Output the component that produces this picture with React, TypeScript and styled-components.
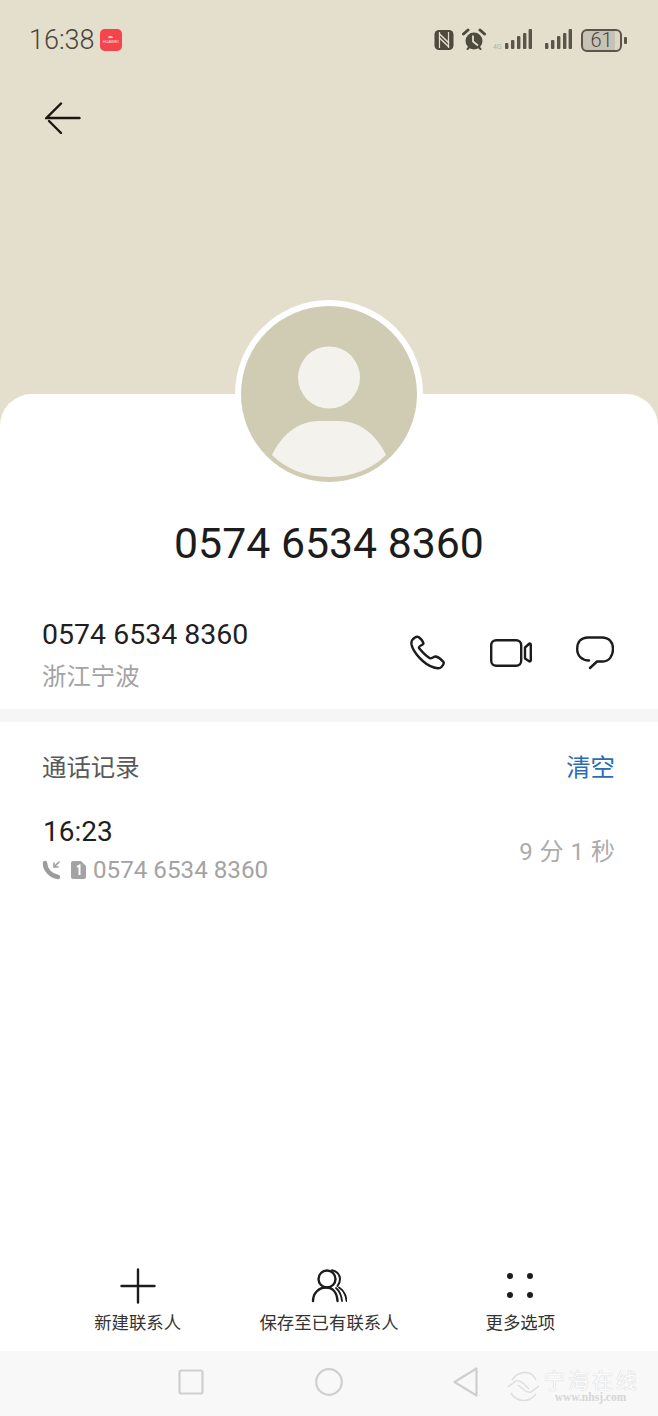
import React from 'react';
import styled, { createGlobalStyle } from 'styled-components';

const CJK = `Roboto, "Noto Sans CJK SC", sans-serif`;

const GlobalStyle = createGlobalStyle`
  html, body {
    margin: 0;
    padding: 0;
    background: #ffffff;
    font-family: ${CJK};
  }
`;

const Page = styled.div`
  position: relative;
  width: 658px;
  height: 1416px;
  display: flex;
  flex-direction: column;
  overflow: hidden;
  background: #e4dfcd;
`;

const Header = styled.header`
  height: 394px;
  flex: none;
  display: flex;
  flex-direction: column;
`;

const StatusBar = styled.div`
  height: 80px;
  padding: 0 31px 0 29px;
  display: flex;
  align-items: center;
  justify-content: space-between;
  color: #4a4538;
`;

const StatusLeft = styled.div`
  display: flex;
  align-items: center;
  gap: 5px;
`;

const Clock = styled.span`
  font-size: 27px;
  font-weight: 300;
  line-height: 1;
`;

const AppBadge = styled.div`
  width: 22px;
  height: 22px;
  border-radius: 5px;
  background: #f4444c;
  box-shadow: 0 0 1px #f7a09c;
  display: flex;
  flex-direction: column;
  align-items: center;
  justify-content: center;
  gap: 2px;
  color: #ffe6e4;
  font-size: 4px;
  line-height: 1;
  font-family: "Liberation Sans", sans-serif;
`;

const BadgeMark = styled.span`
  width: 5px;
  height: 2px;
  border-radius: 2px 2px 0 0;
  background: #ffc9c6;
`;

const StatusRight = styled.div`
  display: flex;
  align-items: center;
`;

const NfcIcon = styled.svg`
  width: 20px;
  height: 22px;
  margin-right: 8px;
`;

const AlarmIcon = styled.svg`
  width: 24px;
  height: 24px;
  margin-right: 7px;
`;

const Signal = styled.svg<{ $gap: number }>`
  width: 39px;
  height: 22px;
  margin-right: ${p => p.$gap}px;
`;

const Battery = styled.div`
  width: 41px;
  height: 23px;
  box-sizing: border-box;
  border: 2px solid #5a5548;
  border-radius: 6px;
  background: linear-gradient(90deg, #c6c2b5 0 86%, #dcd8c8 86% 100%);
  display: flex;
  align-items: center;
  justify-content: center;
  font-size: 20px;
  font-weight: 300;
  line-height: 1;
  color: #4a4538;
`;

const BatteryTip = styled.div`
  width: 3px;
  height: 7px;
  margin-left: 2px;
  border-radius: 1px;
  background: #5a5548;
`;

const BackButton = styled.button`
  width: 36px;
  height: 34px;
  margin: 21px 0 0 45px;
  padding: 0;
  border: none;
  background: none;
  display: flex;
`;

const Sheet = styled.main`
  flex: 1;
  min-height: 0;
  display: flex;
  flex-direction: column;
  background: #ffffff;
  border-radius: 32px 32px 0 0;
`;

const Avatar = styled.svg`
  display: block;
  width: 188px;
  height: 188px;
  margin: -94px auto 0;
`;

const Title = styled.h1`
  margin: 30px 0 0;
  height: 50px;
  font-size: 42.8px;
  font-weight: 400;
  line-height: 50px;
  text-align: center;
  color: #1c1c1c;
`;

const NumberRow = styled.section`
  height: 113px;
  margin-top: 41px;
  padding: 0 44px 0 42px;
  box-sizing: border-box;
  display: flex;
  justify-content: space-between;
  border-bottom: 13px solid #f6f6f6;
`;

const NumberInfo = styled.div`
  padding-top: 7px;
`;

const NumberText = styled.div`
  height: 38px;
  font-size: 28.5px;
  line-height: 38px;
  color: #1f1f1f;
`;

const Region = styled.div`
  margin-top: 5px;
  font-size: 24.4px;
  line-height: 36px;
  color: #a3a3a3;
`;

const ActionIcons = styled.div`
  display: flex;
  align-items: center;
  align-self: flex-start;
  gap: 44px;
  padding-top: 26px;
`;

const LogSection = styled.section`
  padding: 25px 43px 0 42px;
`;

const LogHeader = styled.div`
  height: 36px;
  display: flex;
  align-items: center;
  justify-content: space-between;
  font-size: 24.4px;
  color: #595959;
`;

const ClearLink = styled.span`
  color: #2a6db5;
`;

const LogRow = styled.div`
  margin-top: 31px;
  display: flex;
  align-items: flex-start;
  justify-content: space-between;
`;

const LogTime = styled.div`
  height: 36px;
  margin-left: 1px;
  font-size: 28px;
  line-height: 36px;
  color: #1f1f1f;
`;

const LogDetail = styled.div`
  height: 36px;
  margin-top: 2px;
  display: flex;
  align-items: center;
  font-size: 24.2px;
  color: #a3a3a3;
`;

const CallIcon = styled.svg`
  margin-right: 9px;
`;

const SimIcon = styled.svg`
  margin-right: 7px;
`;

const Duration = styled.div`
  margin-top: 20px;
  font-size: 24px;
  line-height: 36px;
  color: #ababab;
  word-spacing: 1px;
`;

const BottomActions = styled.nav`
  margin-top: auto;
  padding: 0 42px 16px;
  display: grid;
  grid-template-columns: repeat(3, 1fr);
`;

const BottomAction = styled.div`
  display: flex;
  flex-direction: column;
  align-items: center;
  gap: 7px;
`;

const BottomLabel = styled.span`
  font-size: 17.4px;
  line-height: 24px;
  color: #333333;
`;

const NavBar = styled.div`
  flex: none;
  height: 65px;
  background: #f8f8f8;
  display: grid;
  grid-template-columns: 138px 138px 136px;
  justify-content: center;
  justify-items: center;
  align-items: center;
  padding-right: 2px;
  padding-bottom: 4px;
  box-sizing: border-box;
`;

const Watermark = styled.div`
  position: absolute;
  left: 507px;
  top: 1370px;
  display: flex;
  align-items: center;
  gap: 4px;
  color: #fbfbfb;
  text-shadow: 0 0 1px #d2d2d2, 0 0 1px #d2d2d2;
`;

const WatermarkText = styled.div`
  display: flex;
  flex-direction: column;
  align-items: center;
`;

const WatermarkName = styled.span`
  font-size: 21px;
  line-height: 22px;
  letter-spacing: 3px;
  margin-right: -3px;
`;

const WatermarkUrl = styled.span`
  font-family: "Liberation Serif", serif;
  font-size: 11.5px;
  font-weight: 700;
  line-height: 11px;
  color: #d6d6d6;
  text-shadow: none;
`;

const SignalBars = ({ faint }: { faint?: boolean }) => (
  <Signal $gap={faint ? 1 : 9} viewBox="0 0 39 22">
    {faint && <text x="0" y="20" fontSize="7" fill="#b5b1a3" fontFamily="Roboto, sans-serif">4G</text>}
    <g fill="#5a5548">
      <rect x="12" y="14" width="3.4" height="6" rx="1" />
      <rect x="18" y="11" width="3.4" height="9" rx="1" />
      <rect x="24" y="7" width="3.4" height="13" rx="1" />
      <rect x="30" y="4" width="3.4" height="16" rx="1" />
      <rect x="35.6" y="0" width="3.4" height="20" rx="1" />
    </g>
  </Signal>
);

export default function App() {
  return (
    <Page>
      <GlobalStyle />
      <Header>
        <StatusBar>
          <StatusLeft>
            <Clock>16:38</Clock>
            <AppBadge>
              <BadgeMark />
              <span>HUAWEI</span>
            </AppBadge>
          </StatusLeft>
          <StatusRight>
            <NfcIcon viewBox="0 0 20 22">
              <rect x="0.5" y="1" width="19" height="20" rx="4.5" fill="#4f4a3e" />
              <path d="M5.500 3v16M14.500 3v16" stroke="#e4dfcd" strokeWidth="1.200" />
              <path d="M5 4.500 15 14M5 8.500 15 18" fill="none" stroke="#e4dfcd" strokeWidth="1.600" />
            </NfcIcon>
            <AlarmIcon viewBox="0 0 24 24">
              <circle cx="12" cy="13" r="8.500" fill="#4f4a3e" />
              <path d="M1.500 6 6 2M22.500 6 18 2" stroke="#4f4a3e" strokeWidth="3" strokeLinecap="round" />
              <path d="M5.500 21l2-2M18.500 21l-2-2" stroke="#4f4a3e" strokeWidth="2" strokeLinecap="round" />
              <path d="M11 7.500v6l5 4" fill="none" stroke="#e4dfcd" strokeWidth="1.800" />
            </AlarmIcon>
            <SignalBars faint />
            <SignalBars />
            <Battery>61</Battery>
            <BatteryTip />
          </StatusRight>
        </StatusBar>
        <BackButton aria-label="back">
          <svg width="36" height="34" viewBox="0 0 36 34" fill="none" stroke="#1a1712" strokeWidth="2.400" strokeLinecap="round">
            <path d="M34.500 17H1.500L16 2.500" />
            <path d="M4 20 16 32" />
          </svg>
        </BackButton>
      </Header>

      <Sheet>
        <Avatar viewBox="0 0 188 188">
          <circle cx="94" cy="94" r="94" fill="#ffffff" />
          <circle cx="94" cy="94" r="88" fill="#d0cbb3" />
          <circle cx="94" cy="77.500" r="31" fill="#f4f2ec" />
          <path d="M37 155C46 136 62 121 84 121h20c22 0 38 15 47 34-13 13-33 22-57 22s-44-9-57-22Z" fill="#f4f2ec" />
        </Avatar>
        <Title>0574 6534 8360</Title>

        <NumberRow>
          <NumberInfo>
            <NumberText>0574 6534 8360</NumberText>
            <Region>浙江宁波</Region>
          </NumberInfo>
          <ActionIcons>
            <svg width="36" height="36" viewBox="0 0 36 36" fill="none" stroke="#1c1c1c" strokeWidth="2.400" strokeLinejoin="round">
              <path d="M5 2.500C2.500 4 1 6.500 1.500 9.500C3 17 14 30 24 32.500C27 33.500 30 33.500 31.500 32C33 30.500 34.500 29 33.500 27C31 24 28 22 26 21.500C24 21 21 24.500 19.500 23C15.500 20.500 11 15.500 9 13C8 11 13.500 10 13.500 8.500C13 6 10.500 3.500 8.500 2C7.500 1.500 6 1.800 5 2.500Z" />
            </svg>
            <svg width="42" height="28" viewBox="0 0 42 28" fill="none" stroke="#1c1c1c" strokeWidth="2.400" strokeLinejoin="round">
              <rect x="1.200" y="1.200" width="30" height="25.600" rx="5" />
              <path d="M35 8.500v11l4.500 3c.8 0 1.300-.5 1.300-1.200V5.700c0-.7-.5-1.200-1.300-1.200Z" />
            </svg>
            <svg width="38" height="34" viewBox="0 0 38 34" fill="none" stroke="#1c1c1c" strokeWidth="2.400" strokeLinecap="round" strokeLinejoin="round">
              <path d="M14 32 21 25.500H27C33 25.500 37 20 37 13C37 6 33 1.500 26 1.500H12C5 1.500 1.200 6 1.200 13C1.200 20 6 24.500 13 24.500" />
            </svg>
          </ActionIcons>
        </NumberRow>

        <LogSection>
          <LogHeader>
            <span>通话记录</span>
            <ClearLink>清空</ClearLink>
          </LogHeader>
          <LogRow>
            <div>
              <LogTime>16:23</LogTime>
              <LogDetail>
                <CallIcon width="20" height="20" viewBox="0 0 20 20" fill="none" stroke="#9c9c9c" strokeLinecap="round">
                  <path d="M3 3c0 7 6 13 13 14" strokeWidth="4.500" />
                  <path d="M17 2l-5 5M12 3v4h4" strokeWidth="1.600" />
                </CallIcon>
                <SimIcon width="15" height="18" viewBox="0 0 15 18">
                  <path d="M2 0h8l5 5v11a2 2 0 0 1-2 2H2a2 2 0 0 1-2-2V2a2 2 0 0 1 2-2Z" fill="#a3a3a3" />
                  <path d="M6 6l2.500-1.500V14" fill="none" stroke="#ffffff" strokeWidth="2" />
                </SimIcon>
                0574 6534 8360
              </LogDetail>
            </div>
            <Duration>9 分 1 秒</Duration>
          </LogRow>
        </LogSection>

        <BottomActions>
          <BottomAction>
            <svg width="36" height="36" viewBox="0 0 36 36" stroke="#1c1c1c" strokeWidth="2.400" strokeLinecap="round">
              <path d="M18 1.500v33M1.500 18h33" />
            </svg>
            <BottomLabel>新建联系人</BottomLabel>
          </BottomAction>
          <BottomAction>
            <svg width="36" height="36" viewBox="0 0 36 36" fill="none" stroke="#1c1c1c" strokeWidth="2.400" strokeLinecap="round">
              <circle cx="16" cy="11" r="8.500" />
              <path d="M2 33C2 25 8 19.500 15 19.500C22 19.500 26 25 26.500 33" />
              <path d="M21 2.200C26 3 29 7 29 11C29 14 28 16 26.500 18" strokeWidth="2" />
              <path d="M25 20C28.500 23 30.500 28 31 33" strokeWidth="1.800" />
              <path d="M28 19.500C32 22 35 27 35.500 33" strokeWidth="1.800" />
            </svg>
            <BottomLabel>保存至已有联系人</BottomLabel>
          </BottomAction>
          <BottomAction>
            <svg width="36" height="36" viewBox="0 0 36 36" fill="#1c1c1c">
              <circle cx="8" cy="8" r="3" />
              <circle cx="28" cy="8" r="3" />
              <circle cx="8" cy="27" r="3" />
              <circle cx="28" cy="27" r="3" />
            </svg>
            <BottomLabel>更多选项</BottomLabel>
          </BottomAction>
        </BottomActions>
      </Sheet>

      <NavBar>
        <svg width="26" height="26" viewBox="0 0 26 26" fill="none" stroke="#cfcfcf" strokeWidth="2.200">
          <rect x="1.500" y="1.500" width="23" height="23" rx="2" />
        </svg>
        <svg width="28" height="28" viewBox="0 0 28 28" fill="none" stroke="#cfcfcf" strokeWidth="2.200">
          <circle cx="14" cy="14" r="12.800" />
        </svg>
        <svg width="26" height="30" viewBox="0 0 26 30" fill="none" stroke="#cfcfcf" strokeWidth="2.200" strokeLinejoin="round">
          <path d="M23.500 1.500v27L1.500 15Z" />
        </svg>
      </NavBar>

      <Watermark>
        <svg width="33" height="31" viewBox="0 0 33 31" fill="none" stroke="#dedede" strokeWidth="1.500">
          <path d="M5 9C9 3 14 1.500 18 1.500C23 1.500 27 4 29 9M4 22C7 27 12 29.500 17 29.500C22 29.500 26 27 29 23" />
          <path d="M1 16 9 10C12 9 15 11 17 13L22 18M32 15 24 21C21 22 18 20 16 18L11 14" />
        </svg>
        <WatermarkText>
          <WatermarkName>宁海在线</WatermarkName>
          <WatermarkUrl>www.nhsj.com</WatermarkUrl>
        </WatermarkText>
      </Watermark>
    </Page>
  );
}
